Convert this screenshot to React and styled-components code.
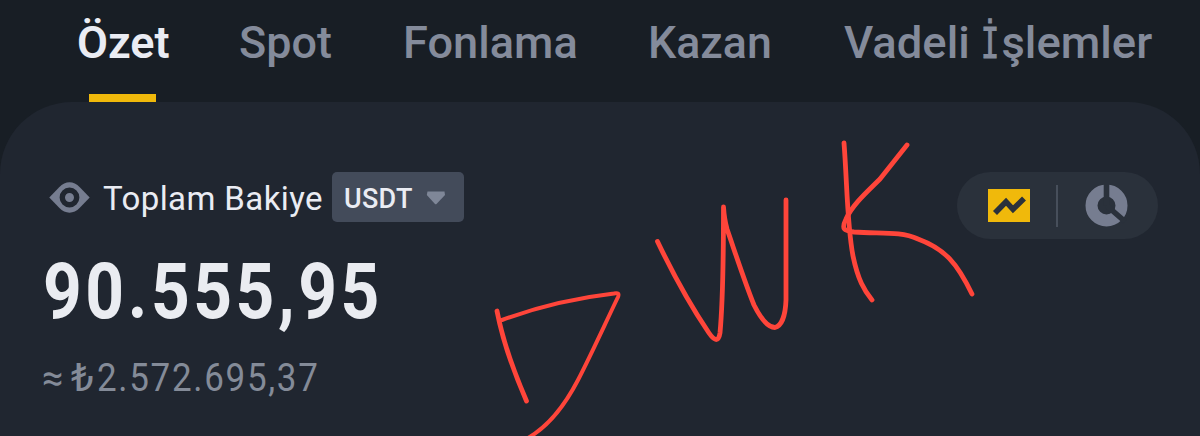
import React from 'react';
import styled, { createGlobalStyle } from 'styled-components';

const GlobalStyle = createGlobalStyle`
  * { box-sizing: border-box; }
  body {
    margin: 0;
    background: #181e25;
    font-family: Roboto, "Liberation Sans", sans-serif;
    overflow: hidden;
  }
`;

const Screen = styled.div`
  position: relative;
  width: 1200px;
  height: 436px;
  overflow: hidden;
  background: #181e25;
`;

const Tabs = styled.nav`
  display: flex;
  gap: 72px;
  height: 102px;
  padding-left: 77px;
`;

const Tab = styled.div`
  display: flex;
  flex: none;
  flex-direction: column;
  width: ${(p) => p.$width}px;
  color: ${(p) => (p.$active ? '#eaecf3' : '#848b9b')};
  font-weight: ${(p) => (p.$active ? 600 : 500)};
`;

const Text = styled.span`
  display: block;
  white-space: nowrap;
  font-size: ${(p) => p.$size}px;
  line-height: ${(p) => p.$line}px;
  letter-spacing: ${(p) => p.$spacing || 0}px;
  transform: scaleX(${(p) => p.$stretch || 1});
  transform-origin: left;
`;

const SlabLetter = styled.span`
  display: inline-block;
  width: 20px;
  font-family: "DejaVu Sans Mono", monospace;
  font-size: 42px;
  line-height: 1;
  letter-spacing: 0;
  transform: scaleX(0.72);
  transform-origin: left;
  -webkit-text-stroke: 1px currentColor;
`;

const Indicator = styled.div`
  align-self: center;
  width: 67px;
  height: 8px;
  margin-top: 8px;
  background: #f0b90b;
`;

const Panel = styled.main`
  height: 334px;
  padding: 70px 42px 0 44px;
  border-radius: 72px 72px 0 0;
  background: #202630;
`;

const Header = styled.div`
  display: flex;
  justify-content: space-between;
  height: 67px;
`;

const Balance = styled.div`
  display: flex;
  align-items: center;
  height: 50px;
  padding-left: 5px;
`;

const BalanceLabel = styled.div`
  width: 229px;
  margin-left: 13px;
  padding-top: 4px;
  color: #eaecf3;
`;

const Currency = styled.div`
  display: flex;
  align-items: center;
  width: 132px;
  height: 50px;
  padding-left: 12px;
  border-radius: 5px;
  background: #434b5a;
  color: #eaecf3;
  font-weight: 500;
`;

const CurrencyName = styled.div`
  width: 82px;
  padding-top: 4px;
`;

const Switcher = styled.div`
  display: flex;
  align-items: center;
  width: 201px;
  height: 67px;
  padding-left: 31px;
  border-radius: 34px;
  background: #2a313b;
`;

const Divider = styled.div`
  width: 2px;
  height: 42px;
  margin: 0 27px 0 26px;
  background: #474f5b;
`;

const Amount = styled.div`
  margin-left: -1px;
  color: #eaecf1;
  font-weight: 700;
`;

const Converted = styled.div`
  display: flex;
  color: #848b98;
`;

const Approx = styled.div`
  width: 29px;
  margin-left: -2px;
`;

const CurrencySign = styled.div`
  width: 26px;
`;

const Scribble = styled.svg`
  position: absolute;
  inset: 0;
  pointer-events: none;
  fill: none;
  stroke: #ff453a;
  stroke-width: 4.8;
  stroke-linecap: round;
  stroke-linejoin: round;
`;

const EyeIcon = () => (
  <svg width="41" height="31" viewBox="0 0 41 31">
    <path
      d="M0.300 15.500L10.200 5.200C16.500 -1.300 24.500 -1.300 30.800 5.200L40.700 15.500L30.800 25.800C24.500 32.300 16.500 32.300 10.200 25.800Z"
      fill="#767d90"
    />
    <circle cx="20.500" cy="15.500" r="7.200" fill="#767d90" stroke="#202630" strokeWidth="5.400" />
  </svg>
);

const CaretIcon = () => (
  <svg width="20" height="16" viewBox="0 0 20 16">
    <path d="M1.500 2.500H18.500L19 6L10.500 15Q9.800 15.700 9 15L0.800 6Z" fill="#7f8798" />
  </svg>
);

const ChartIcon = () => (
  <svg width="42" height="33" viewBox="0 0 42 33">
    <rect width="42" height="33" fill="#f0b90b" />
    <path d="M7 24L18 12.700L25 20.300L36 9.500" fill="none" stroke="#2a313b" strokeWidth="5.600" />
  </svg>
);

const PieIcon = () => (
  <svg width="43" height="43" viewBox="0 0 43 43">
    <circle cx="21.500" cy="21.500" r="15" fill="none" stroke="#767d90" strokeWidth="12" />
    <path d="M21.500 21.500V0M21.500 21.500L40 37.500" stroke="#2a313b" strokeWidth="5.600" fill="none" />
  </svg>
);

const tabs = [
  { label: 'Özet', width: 90, stretch: 1.01, active: true },
  { label: 'Spot', width: 92, stretch: 1.01 },
  { label: 'Fonlama', width: 173, stretch: 1.015 },
  { label: 'Kazan', width: 124, stretch: 1.005 },
  { label: <>Vadeli <SlabLetter>İ</SlabLetter>şlemler</>, width: 308, stretch: 1.02 },
];

export default function App() {
  return (
    <Screen>
      <GlobalStyle />
      <Tabs>
        {tabs.map((tab, i) => (
          <Tab key={i} $width={tab.width} $active={tab.active}>
            <Text $size={44.5} $line={86} $stretch={tab.stretch}>{tab.label}</Text>
            {tab.active && <Indicator />}
          </Tab>
        ))}
      </Tabs>
      <Panel>
        <Header>
          <Balance>
            <EyeIcon />
            <BalanceLabel>
              <Text $size={33} $line={50} $spacing={0.4}>Toplam Bakiye</Text>
            </BalanceLabel>
            <Currency>
              <CurrencyName>
                <Text $size={27} $line={50} $spacing={0.3}>USDT</Text>
              </CurrencyName>
              <CaretIcon />
            </Currency>
          </Balance>
          <Switcher>
            <ChartIcon />
            <Divider />
            <PieIcon />
          </Switcher>
        </Header>
        <Amount>
          <Text $size={78} $line={105.6} $spacing={4.1} $stretch={0.867}>90.555,95</Text>
        </Amount>
        <Converted>
          <Approx>
            <Text $size={38} $line={66}>≈</Text>
          </Approx>
          <CurrencySign>
            <Text $size={38} $line={66} $stretch={1.1}>₺</Text>
          </CurrencySign>
          <Text $size={38} $line={66} $spacing={1.85} $stretch={0.92}>2.572.695,37</Text>
        </Converted>
      </Panel>
      <Scribble width="1200" height="436" viewBox="0 0 1200 436">
        <path d="M497 311C502 337 513 370 526.500 401" />
        <path d="M502 320C540 306 575 298 614 293.500Q620 292 618 297C605 324 591 355 578 380C565 405 549 426 528 438" strokeWidth="4" />
        <path d="M657.500 241.500C675 278 690 305 709 333Q718 346 720 333C723 300 723.500 250 723.500 207C724 215 725 222 727 229C735 252 745 283 754 305C762 321 769 327.500 775 327.500C782 326 785.500 314 786 300V200" />
        <path d="M844 143C847 180 847 225 853 256C858 280 864 290 872 300" />
        <path d="M907 145L880 179C868 191 853 204 846 219C841 229 844 231 854 232C880 234 900 231 918 239C945 249 957 263 972 294" />
      </Scribble>
    </Screen>
  );
}
